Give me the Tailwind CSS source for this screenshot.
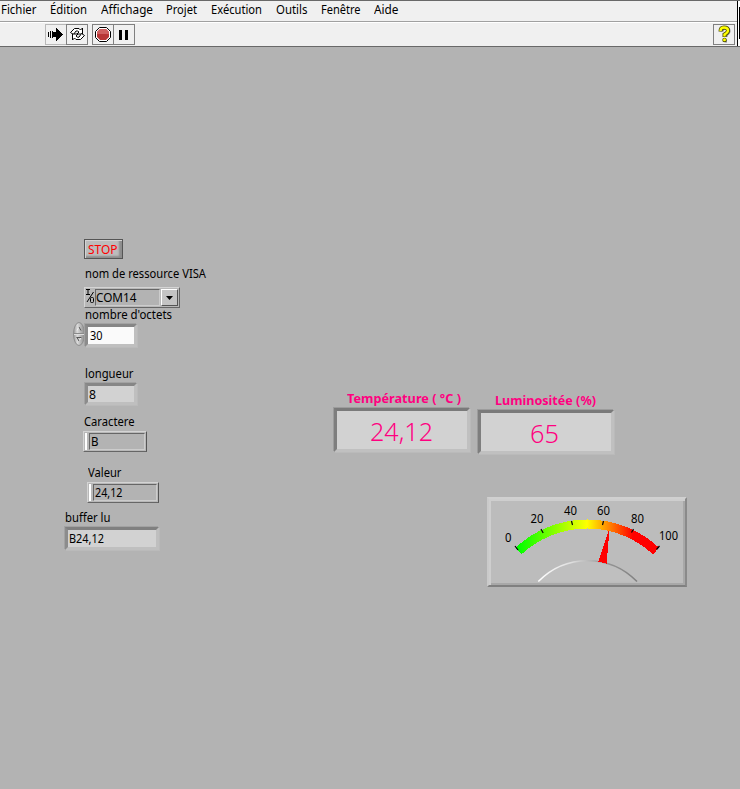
<!DOCTYPE html>
<html lang="fr">
<head>
<meta charset="utf-8">
<title>VISA</title>
<script src="https://cdn.jsdelivr.net/npm/@tailwindcss/browser@4"></script>
</head>
<body class="h-[789px] w-[740px] overflow-hidden bg-[#b3b3b3] font-['Noto_Sans','Open_Sans',sans-serif] text-[12px] leading-4 text-black">
<div class="flex h-full flex-col">
  <header class="flex h-[47px] border-t border-b border-[#696969] bg-[#f0f0f0]">
    <div class="flex grow flex-col">
      <nav class="flex h-[21px] border-b border-[#a0a0a0] pl-px whitespace-nowrap">
        <svg class="h-5 w-[49px]"><text y="13" textLength="35.500" lengthAdjust="spacingAndGlyphs">Fichier</text></svg>
        <svg class="h-5 w-[51px]"><text y="13" textLength="37" lengthAdjust="spacingAndGlyphs">Édition</text></svg>
        <svg class="h-5 w-[65px]"><text y="13" textLength="52" lengthAdjust="spacingAndGlyphs">Affichage</text></svg>
        <svg class="h-5 w-[45px]"><text y="13" textLength="31" lengthAdjust="spacingAndGlyphs">Projet</text></svg>
        <svg class="h-5 w-[65px]"><text y="13" textLength="51" lengthAdjust="spacingAndGlyphs">Exécution</text></svg>
        <svg class="h-5 w-[45px]"><text y="13" textLength="31.500" lengthAdjust="spacingAndGlyphs">Outils</text></svg>
        <svg class="h-5 w-[53px]"><text y="13" textLength="39.500" lengthAdjust="spacingAndGlyphs">Fenêtre</text></svg>
        <svg class="h-5 w-[40px]"><text y="13" textLength="24.500" lengthAdjust="spacingAndGlyphs">Aide</text></svg>
      </nav>
      <div class="flex h-[24px] items-start border-t border-white pt-px pr-[2px] pl-[45px]">
        <div class="h-[21px] w-[21px] border border-r-0 border-[#b8b8b8]">
          <svg class="h-[19px] w-[20px]" viewBox="0 0 20 19" shape-rendering="crispEdges"><path d="M2 7h1v5H2zM4 6h1v7H4zM6 6h1v7H6zM7 7h3V3h1v1h1v1h1v1h1v1h1v1h1v1h1v1h-1v1h-1v1h-1v1h-1v1h-1v1h-1v1h-1v-4H7z"/></svg>
        </div>
        <div class="h-[21px] w-[22px] border border-[#808080]">
          <svg class="h-[19px] w-[20px]" viewBox="0 0 20 19" fill="#fff" stroke="#000"><path d="M3.500 7.500L7.500 3.500H12l1.500 1.500 2-2v6H10l2-2-1.500-1H9L6.500 9.500z"/><path d="M17.500 10.500L13.500 14.500H9L7.500 13l-2 2V9H11L9 11l1.500 1.200H12L14.500 8.500z"/></svg>
        </div>
        <div class="ml-[4px] h-[21px] w-[22px] border border-[#808080]">
          <svg class="h-[19px] w-[20px]" viewBox="0 0 20 19"><path d="M6.500 2.500h7l4 4v6l-4 4h-7l-4-4v-6z" fill="#fff" stroke="#000"/><path d="M7 4h6l3 3v5l-3 3H7l-3-3V7z" fill="#b83737"/><path d="M7 4h6l3 3v2H4V7z" fill="#cf6060"/></svg>
        </div>
        <div class="flex h-[21px] w-[21px] items-center justify-center gap-[3px] border border-l-0 border-[#808080] pr-[2px]">
          <div class="h-[10px] w-[3px] bg-black"></div><div class="h-[10px] w-[3px] bg-black"></div>
        </div>
        <div class="ml-auto h-[21px] w-[22px] border border-[#808080]">
          <svg class="h-[19px] w-[20px]" viewBox="0 0 20 19" fill="none"><path d="M8 6.500q0-3 3-3.500 4 0 4 3 0 2-3 4v2M11 16h2" stroke="#888" stroke-width="3"/><path d="M6.500 6.500q0-4 3.500-4 4 0 4 3 0 2-3.500 4v2.500" stroke="#4a4a00" stroke-width="4"/><circle cx="10.500" cy="15" r="2.200" fill="#4a4a00"/><path d="M6.500 6q0-3.500 3.500-3.500 4 0 4 3 0 2-3.500 4v2" stroke="#ff0" stroke-width="2.400"/><circle cx="10.500" cy="14.800" r="1.500" fill="#ff0"/></svg>
        </div>
      </div>
    </div>
    <div class="flex w-[3px] bg-white"><div class="w-px bg-black"></div><div class="mt-[6px] ml-px h-[32px] w-px bg-black"></div></div>
  </header>

  <!-- Front panel: controls are freely placed -->
  <main class="relative grow">
    <div class="absolute top-[192px] left-[84px] h-[20px] w-[39px] border border-[#555] bg-[#bcbcbc] pl-[3px] shadow-[inset_1px_1px_0_#d4d4d4,inset_-3px_-2px_2px_#8c8c8c]">
      <svg class="h-[18px] w-[32px] overflow-visible fill-[#ff0000]"><text y="14" textLength="29.500" lengthAdjust="spacingAndGlyphs">STOP</text></svg>
    </div>
    <svg class="absolute top-[218px] left-[85px] h-5 w-[124px] overflow-visible"><text y="13" textLength="121" lengthAdjust="spacingAndGlyphs">nom de ressource VISA</text></svg>

    <div class="absolute top-[240px] left-[84px] flex h-[21px] w-[96px] border border-t-[#d4d4d4] border-r-[#666] border-b-[#666] border-l-[#d4d4d4] bg-[#b8b8b8] p-px">
      <svg class="h-[17px] w-[9px] shrink-0" viewBox="0 0 9 17" fill="none" stroke="#000"><path d="M0 .5h4M2 1v5M0 5.500h4M7.500 3L1 13"/><rect x="4.500" y="8.500" width="3" height="5" rx="1"/></svg>
      <div class="h-[17px] w-[65px] border border-t-[#666] border-r-[#ccc] border-b-[#ccc] border-l-[#666] bg-[#b3b3b3]"><svg class="h-[15px] w-[50px] overflow-visible"><text y="12" textLength="40.500" lengthAdjust="spacingAndGlyphs">COM14</text></svg></div>
      <div class="ml-px flex h-[17px] w-[17px] items-center justify-center border border-t-white border-r-[#555] border-b-[#555] border-l-white bg-[#c4c4c4]">
        <svg class="h-[4px] w-[7px]" viewBox="0 0 7 4"><path d="M0 0h7L3.500 4z"/></svg>
      </div>
    </div>

    <svg class="absolute top-[259px] left-[85px] h-5 w-[90px]"><text y="13" textLength="87" lengthAdjust="spacingAndGlyphs">nombre d'octets</text></svg>
    <svg class="absolute top-[275px] left-[73px] h-[24px] w-[12px]" viewBox="0 0 12 24"><defs><linearGradient id="sp"><stop stop-color="#999"/><stop offset=".35" stop-color="#dadada"/><stop offset="1" stop-color="#8c8c8c"/></linearGradient></defs><ellipse cx="6" cy="12" rx="5.500" ry="11.500" fill="url(#sp)" stroke="#8e8e8e"/><path d="M1 11.500h10" stroke="#8a8a8a"/><path d="M1 12.500h10" stroke="#ddd"/><path d="M4 8.500L6 5M8 15.500L6 19" fill="none" stroke="#eee"/><path d="M6 5l2 3.500M3.500 15.500h5M4 15.500L6 19" fill="none" stroke="#555"/></svg>
    <div class="absolute top-[277px] left-[85px] h-[23px] w-[52px] border-3 border-t-[#868686] border-r-[#bfbfbf] border-b-[#bfbfbf] border-l-[#8c8c8c] bg-[#fafafa] pl-[2px] shadow-[-1px_-1px_0_#a2a2a2,1px_1px_0_#bababa]"><svg class="h-[17px] w-[30px]"><text y="13" textLength="12.500" lengthAdjust="spacingAndGlyphs">30</text></svg></div>

    <svg class="absolute top-[318px] left-[85px] h-5 w-[52px]"><text y="13" textLength="48.500" lengthAdjust="spacingAndGlyphs">longueur</text></svg>
    <div class="absolute top-[336px] left-[85px] h-[22px] w-[52px] border-3 border-t-[#868686] border-r-[#bfbfbf] border-b-[#bfbfbf] border-l-[#8c8c8c] bg-[#d2d2d2] pl-px shadow-[-1px_-1px_0_#a2a2a2,1px_1px_0_#bababa]"><svg class="h-4 w-[30px]"><text y="13" textLength="7" lengthAdjust="spacingAndGlyphs">8</text></svg></div>

    <svg class="absolute top-[366px] left-[84px] h-5 w-[54px]"><text y="13" textLength="50.500" lengthAdjust="spacingAndGlyphs">Caractere</text></svg>
    <div class="absolute top-[384px] left-[83px] flex h-[21px] w-[64px] border border-t-[#d4d4d4] border-r-[#555] border-b-[#666] border-l-[#d4d4d4] bg-[#b8b8b8] p-px">
      <div class="h-[17px] w-[2px] bg-white"></div>
      <div class="ml-[2px] h-[17px] grow border border-t-[#666] border-r-[#ccc] border-b-[#ccc] border-l-[#666] bg-[#b3b3b3] pl-px"><svg class="h-[15px] w-[40px]"><text y="12" textLength="7.500" lengthAdjust="spacingAndGlyphs">B</text></svg></div>
    </div>

    <svg class="absolute top-[417px] left-[88px] h-5 w-[36px]"><text y="13" textLength="33.500" lengthAdjust="spacingAndGlyphs">Valeur</text></svg>
    <div class="absolute top-[435px] left-[87px] flex h-[21px] w-[72px] border border-t-[#d4d4d4] border-r-[#555] border-b-[#666] border-l-[#d4d4d4] bg-[#b8b8b8] p-px">
      <div class="h-[17px] w-[2px] bg-white"></div>
      <div class="ml-[2px] h-[17px] grow border border-t-[#666] border-r-[#ccc] border-b-[#ccc] border-l-[#666] bg-[#b3b3b3] pl-px"><svg class="h-[15px] w-[40px]"><text y="12" textLength="27.500" lengthAdjust="spacingAndGlyphs">24,12</text></svg></div>
    </div>

    <svg class="absolute top-[462px] left-[65px] h-5 w-[50px]"><text y="13" textLength="45.500" lengthAdjust="spacingAndGlyphs">buffer lu</text></svg>
    <div class="absolute top-[480px] left-[65px] h-[23px] w-[94px] border-3 border-t-[#808080] border-r-[#bfbfbf] border-b-[#bfbfbf] border-l-[#8c8c8c] bg-[#d2d2d2] pl-px shadow-[-1px_-1px_0_#a2a2a2,1px_1px_0_#bababa]"><svg class="h-[17px] w-[60px]"><text y="13" textLength="35" lengthAdjust="spacingAndGlyphs">B24,12</text></svg></div>

    <svg class="absolute top-[343px] left-[347px] h-5 w-[120px] fill-[#ff0080] text-[13px] font-bold"><text y="13" textLength="114" lengthAdjust="spacingAndGlyphs">Température ( °C )</text></svg>
    <div class="absolute top-[361px] left-[334px] h-[44px] w-[136px] border-3 border-t-[#7a7a7a] border-r-[#c0c0c0] border-b-[#c0c0c0] border-l-[#7e7e7e] bg-[#d2d2d2] pl-[33px] shadow-[-1px_-1px_0_#9c9c9c,1px_1px_0_#bababa]"><svg class="h-[38px] w-[80px] fill-[#ff0080] text-[25px] font-light"><text y="30" textLength="63" lengthAdjust="spacingAndGlyphs">24,12</text></svg></div>

    <svg class="absolute top-[345px] left-[495px] h-5 w-[106px] fill-[#ff0080] text-[13px] font-bold"><text y="13" textLength="101" lengthAdjust="spacingAndGlyphs">Luminositée (%)</text></svg>
    <div class="absolute top-[363px] left-[478px] h-[44px] w-[136px] border-3 border-t-[#7a7a7a] border-r-[#c0c0c0] border-b-[#c0c0c0] border-l-[#7e7e7e] bg-[#d2d2d2] pl-[49px] shadow-[-1px_-1px_0_#9c9c9c,1px_1px_0_#bababa]"><svg class="h-[38px] w-[70px] fill-[#ff0080] text-[25px] font-light"><text y="30" textLength="29" lengthAdjust="spacingAndGlyphs">65</text></svg></div>

    <!-- Gauge, 0 to 100 over 84.6 degrees -->
    <div class="absolute top-[450px] left-[487px] h-[90px] w-[200px] border-2 border-t-[#d0d0d0] border-r-[#8a8a8a] border-b-[#808080] border-l-[#cacaca] bg-[#bcbcbc] shadow-[inset_2px_2px_0_#cecece,inset_-2px_-2px_0_#a8a8a8]">
      <svg class="absolute -top-[2px] -left-[2px] h-[90px] w-[200px]" viewBox="487 497 200 90">
        <defs>
          <linearGradient id="scale" gradientUnits="userSpaceOnUse" x1="518" y1="0" x2="633" y2="0"><stop stop-color="#0f0"/><stop offset=".6" stop-color="#ff0"/><stop offset="1" stop-color="#f00"/></linearGradient>
          <linearGradient id="hub" gradientUnits="userSpaceOnUse" x1="538" y1="0" x2="637" y2="0"><stop stop-color="#fff"/><stop offset=".35" stop-color="#ddd"/><stop offset=".65" stop-color="#999"/><stop offset="1" stop-color="#808080"/></linearGradient>
        </defs>
        <path d="M518.500 551A101 101 0 0 1 656 551" fill="none" stroke="url(#scale)" stroke-width="9" shape-rendering="crispEdges"/>
        <g stroke="#000" stroke-width="1.200">
          <path d="M515 546l3 4"/>
          <path d="M541 529l2.200 4"/>
          <path d="M571.500 521l1 4"/>
          <path d="M603.500 521l-1 4"/>
          <path d="M633.500 529l-2 3.500"/>
          <path d="M659.500 546l-3 3.500"/>
        </g>
        <path d="M538.300 581.500A68.800 68.800 0 0 1 637 581.500" fill="#bfbfbf" stroke="url(#hub)" stroke-width="1.500"/>
        <path d="M609.500 528.500L598.300 561.500 606.700 563.700z" fill="#f00" shape-rendering="crispEdges"/>
        <text x="505" y="542" textLength="6.500" lengthAdjust="spacingAndGlyphs">0</text>
        <text x="530.500" y="523" textLength="13" lengthAdjust="spacingAndGlyphs">20</text>
        <text x="564" y="515" textLength="13" lengthAdjust="spacingAndGlyphs">40</text>
        <text x="597" y="515" textLength="13" lengthAdjust="spacingAndGlyphs">60</text>
        <text x="631" y="523" textLength="13" lengthAdjust="spacingAndGlyphs">80</text>
        <text x="659" y="540" textLength="19" lengthAdjust="spacingAndGlyphs">100</text>
      </svg>
    </div>
  </main>
</div>
</body>
</html>
